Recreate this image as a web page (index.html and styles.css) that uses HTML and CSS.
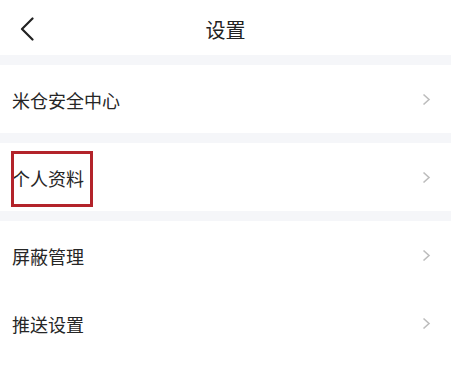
FILE: index.html
```html
<!DOCTYPE html>
<html lang="zh">
<head>
<meta charset="utf-8">
<link rel="stylesheet" href="styles.css">
</head>
<body>
<div class="page">
  <header class="header">
    <svg class="back" width="14" height="24" viewBox="0 0 14 24"><path d="M12.5 1.5 L2 12 L12.5 22.5" fill="none" stroke="#222" stroke-width="2.2" stroke-linecap="round" stroke-linejoin="round"/></svg>
    <div class="title">设置</div>
  </header>
  <div class="gap"></div>
  <div class="row"><span class="label">米仓安全中心</span><svg class="chev" width="9" height="13" viewBox="0 0 9 13"><path d="M1.5 1.5 L7 6.5 L1.5 11.5" fill="none" stroke="#bdbdbd" stroke-width="1.6"/></svg></div>
  <div class="gap"></div>
  <div class="row"><span class="label">个人资料</span><svg class="chev" width="9" height="13" viewBox="0 0 9 13"><path d="M1.5 1.5 L7 6.5 L1.5 11.5" fill="none" stroke="#bdbdbd" stroke-width="1.6"/></svg><div class="mark"></div></div>
  <div class="gap"></div>
  <div class="row"><span class="label">屏蔽管理</span><svg class="chev" width="9" height="13" viewBox="0 0 9 13"><path d="M1.5 1.5 L7 6.5 L1.5 11.5" fill="none" stroke="#bdbdbd" stroke-width="1.6"/></svg></div>
  <div class="row"><span class="label">推送设置</span><svg class="chev" width="9" height="13" viewBox="0 0 9 13"><path d="M1.5 1.5 L7 6.5 L1.5 11.5" fill="none" stroke="#bdbdbd" stroke-width="1.6"/></svg></div>
</div>
</body>
</html>
```
FILE: styles.css
```css
html, body {
  margin: 0;
  padding: 0;
  background: #fff;
}
body {
  font-family: "Noto Sans CJK SC", "Noto Sans", sans-serif;
  color: #222;
}
.page {
  width: 451px;
}
.header {
  position: relative;
  height: 55px;
  display: flex;
  align-items: center;
  justify-content: center;
}
.back {
  position: absolute;
  left: 20px;
  top: 17px;
}
.title {
  font-size: 20px;
  line-height: 24px;
  padding-top: 5px;
  color: #222;
}
.gap {
  height: 10px;
  background: #f5f6f9;
}
.row {
  position: relative;
  height: 68px;
  display: flex;
  align-items: center;
  justify-content: space-between;
  padding: 0 20px 0 12px;
}
.label {
  font-size: 18px;
  line-height: 24px;
  color: #262626;
  padding-top: 2px;
}
.chev {
  display: block;
}
.mark {
  position: absolute;
  left: 11px;
  top: 8px;
  width: 76px;
  height: 50px;
  border: 3px solid #b3232a;
}
```
